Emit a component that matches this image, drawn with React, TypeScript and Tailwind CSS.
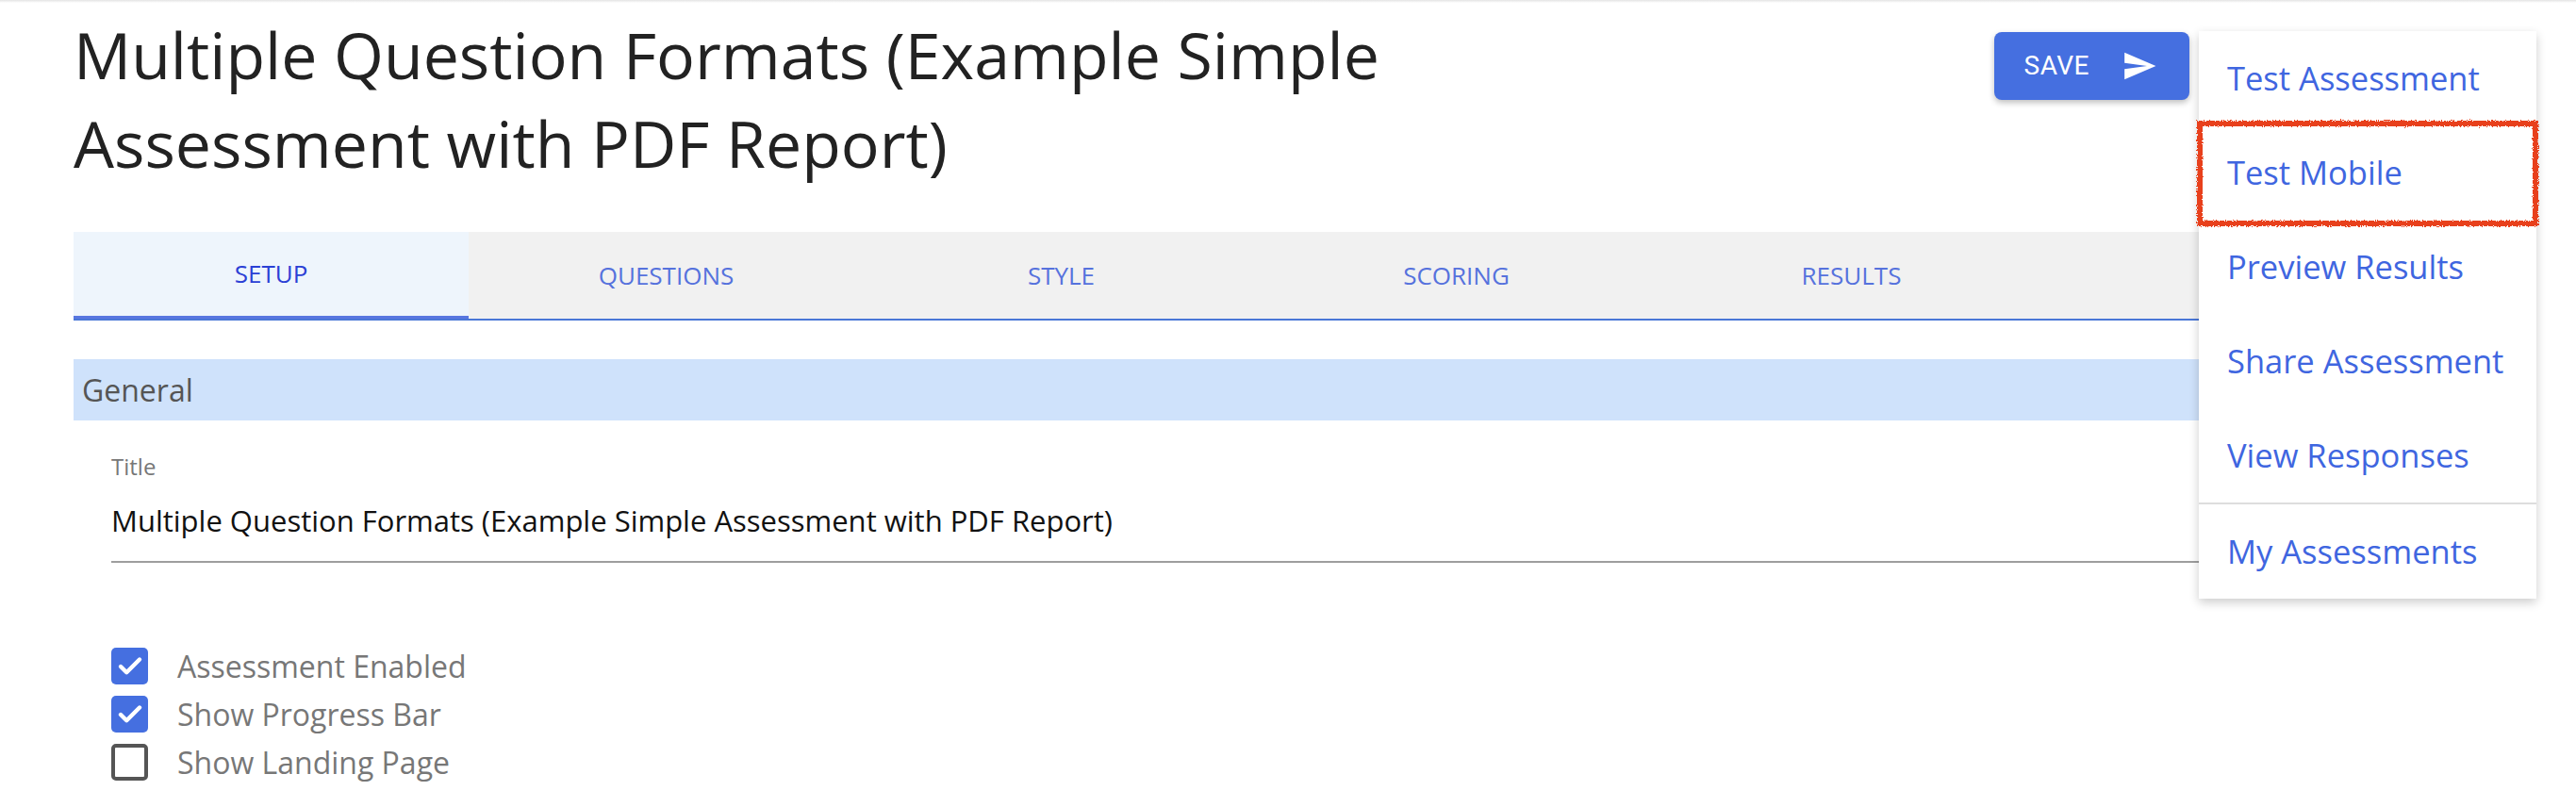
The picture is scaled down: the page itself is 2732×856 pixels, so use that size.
import { Check } from "lucide-react";

const tabs = ["SETUP", "QUESTIONS", "STYLE", "SCORING", "RESULTS"];

const menuItems = [
  "Test Assessment",
  "Test Mobile",
  "Preview Results",
  "Share Assessment",
  "View Responses",
];

const options = [
  { label: "Assessment Enabled", checked: true },
  { label: "Show Progress Bar", checked: true },
  { label: "Show Landing Page", checked: false },
];

const SendIcon = () => (
  <svg viewBox="0 0 24 24" className="w-[38px] h-[38px] fill-white">
    <path d="M2.01 21L23 12 2.01 3 2 10l15 2-15 2z" />
  </svg>
);

const App = () => {
  return (
    <div className="relative min-h-screen bg-white font-['Open_Sans',sans-serif]">
      {/* top edge of the app bar */}
      <div className="h-[3px] bg-gradient-to-b from-[#e4e4e4] to-white" />

      <div className="px-[78px]">
        {/* Header */}
        <div className="flex items-start justify-between">
          <h1 className="w-[1560px] pt-[8px] text-[68px] leading-[94px] font-normal text-[#222]">
            Multiple Question Formats (Example Simple Assessment with PDF Report)
          </h1>

          <button className="mt-[31px] mr-[332px] flex h-[72px] items-center gap-[34px] rounded-[8px] bg-[#456fe0] pl-[32px] pr-[34px] shadow-[0_3px_6px_rgba(0,0,0,0.25)]">
            <span className="font-['Roboto',sans-serif] text-[28px] font-normal tracking-[0.5px] text-white">
              SAVE
            </span>
            <SendIcon />
          </button>
        </div>

        {/* Tabs */}
        <div className="mt-[47px] flex h-[94px] border-b-2 border-[#4a77d7] bg-[#f1f1f1]">
          {tabs.map((tab, i) => (
            <div
              key={tab}
              className={`flex w-[419px] flex-col ${i === 0 ? "bg-[#eef5fc]" : ""}`}
            >
              <div
                className={`flex flex-1 items-center justify-center text-[26px] ${
                  i === 0 ? "text-[#2b40d5]" : "text-[#5672dd]"
                }`}
              >
                {tab}
              </div>
              {i === 0 && <div className="h-[3px] bg-[#5876e0]" />}
            </div>
          ))}
        </div>

        {/* General */}
        <div className="mt-[41px] flex h-[65px] items-center bg-[#cfe2fb] px-[9px] text-[32px] text-[#555]">
          General
        </div>

        {/* Form */}
        <div className="px-[40px]">
          <div className="mt-[33px] text-[24px] leading-[32px] text-[#777]">
            Title
          </div>
          <div className="mt-[21px] border-b-2 border-[#9e9e9e] pb-[23px] text-[31px] leading-[40px] text-[#111]">
            Multiple Question Formats (Example Simple Assessment with PDF Report)
          </div>

          <div className="mt-[90px] flex flex-col gap-[12px]">
            {options.map((o) => (
              <div key={o.label} className="flex h-[39px] items-center gap-[31px]">
                {o.checked ? (
                  <div className="flex h-[39px] w-[39px] items-center justify-center rounded-[5px] bg-[#456fe0]">
                    <Check className="h-[30px] w-[30px] text-white" strokeWidth={3.5} />
                  </div>
                ) : (
                  <div className="h-[39px] w-[39px] rounded-[5px] border-[4px] border-[#555]" />
                )}
                <span className="text-[32px] text-[#777]">{o.label}</span>
              </div>
            ))}
          </div>
        </div>
      </div>

      {/* Dropdown menu */}
      <div className="absolute right-[42px] top-[33px] w-[358px] bg-white shadow-[0_4px_10px_rgba(0,0,0,0.2)]">
        {menuItems.map((item) => (
          <div
            key={item}
            className="flex h-[100px] items-center pl-[30px] text-[34.5px] text-[#3f66e0]"
          >
            {item}
          </div>
        ))}
        <div className="h-[2px] bg-[#dddddd]" />
        <div className="flex h-[100px] items-center pl-[30px] text-[34.5px] text-[#3f66e0]">
          My Assessments
        </div>
      </div>

      {/* Hand-drawn highlight around "Test Mobile" */}
      <svg
        className="absolute left-[2326px] top-[124px]"
        width="370"
        height="122"
      >
        <defs>
          <filter id="rough">
            <feTurbulence type="fractalNoise" baseFrequency="0.9" numOctaves="2" result="noise" />
            <feDisplacementMap in="SourceGraphic" in2="noise" scale="5" />
          </filter>
        </defs>
        <rect
          x="7"
          y="7"
          width="356"
          height="106"
          fill="none"
          stroke="#e8401c"
          strokeWidth="6"
          filter="url(#rough)"
        />
      </svg>
    </div>
  );
};

export default App;
